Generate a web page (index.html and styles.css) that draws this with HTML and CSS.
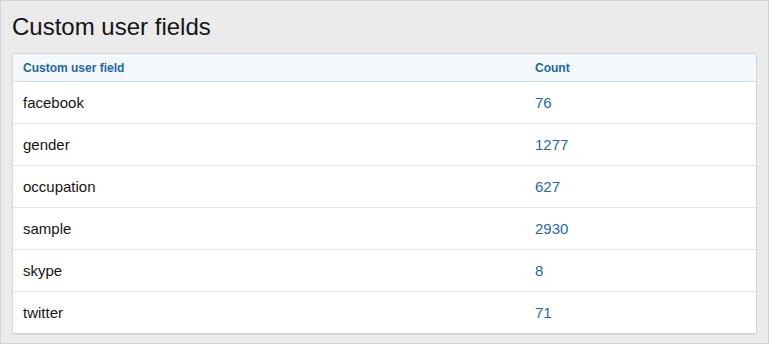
FILE: index.html
```html
<!DOCTYPE html>
<html>
<head>
<meta charset="utf-8">
<link rel="stylesheet" href="styles.css">
</head>
<body>
<div class="page">
  <h1 class="title">Custom user fields</h1>
  <div class="card">
    <div class="row head">
      <div class="c1">Custom user field</div>
      <div class="c2">Count</div>
    </div>
    <div class="row"><div class="c1">facebook</div><div class="c2 num">76</div></div>
    <div class="row"><div class="c1">gender</div><div class="c2 num">1277</div></div>
    <div class="row"><div class="c1">occupation</div><div class="c2 num">627</div></div>
    <div class="row"><div class="c1">sample</div><div class="c2 num">2930</div></div>
    <div class="row"><div class="c1">skype</div><div class="c2 num">8</div></div>
    <div class="row"><div class="c1">twitter</div><div class="c2 num">71</div></div>
  </div>
</div>
</body>
</html>
```
FILE: styles.css
```css
html, body { margin: 0; padding: 0; }
body { font-family: "Liberation Sans", Arial, sans-serif; }
.page {
  box-sizing: border-box;
  width: 769px;
  height: 344px;
  background: #ebebeb;
  border: 1px solid #d2d2d2;
  padding: 11px 11px 0 11px;
}
.title {
  margin: 0;
  font-size: 24px;
  font-weight: normal;
  line-height: 30px;
  color: #141414;
  height: 41px;
}
.card {
  background: #fff;
  border: 1px solid #d6d6d6;
  border-radius: 3px;
  box-shadow: 0 1px 1px rgba(0,0,0,0.08);
  overflow: hidden;
}
.row {
  display: grid;
  grid-template-columns: 512px 1fr;
  padding: 0 10px;
  height: 41px;
  align-items: center;
  border-top: 1px solid #e4e4e4;
  font-size: 15px;
  color: #151515;
}
.row.head {
  border-top: none;
  height: 27px;
  background: #f2f8fc;
  border-bottom: 1px solid #d8dde1;
  font-size: 12px;
  font-weight: bold;
  color: #1f67a5;
}
.row.head + .row { border-top: none; }
.num { color: #1d6aa8; }
```
